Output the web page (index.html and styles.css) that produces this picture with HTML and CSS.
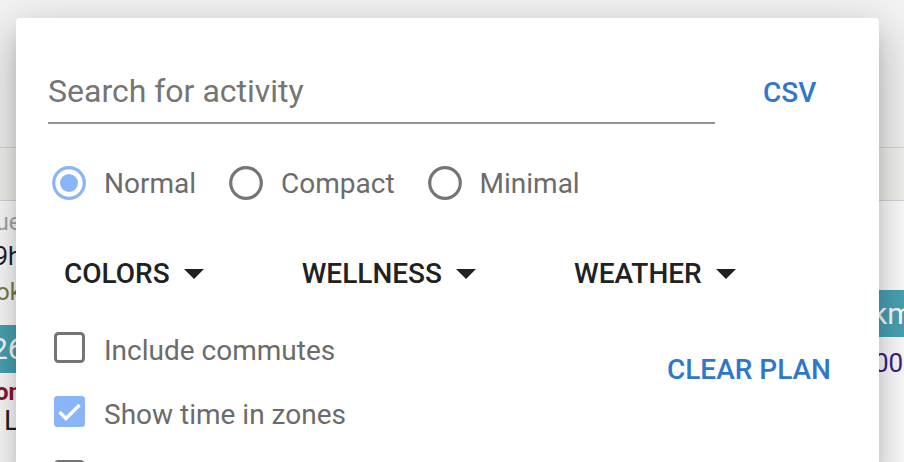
FILE: index.html
```html
<!DOCTYPE html>
<html lang="en">
<head>
<meta charset="utf-8">
<title>Activity options</title>
<link rel="stylesheet" href="styles.css">
</head>
<body>
<div class="page">
  <div class="bg-top"></div>
  <div class="bg-band"></div>
  <div class="bg-rows">
    <div class="bg-left">
      <div class="bl bl-ue">ue</div>
      <div class="bl bl-9h">9h</div>
      <div class="bl bl-ok">ok</div>
      <div class="bl bl-teal">26</div>
      <div class="bl bl-on">on</div>
      <div class="bl bl-l">L</div>
    </div>
    <div class="bg-right">
      <div class="br br-teal">km</div>
      <div class="br br-00">00</div>
    </div>
  </div>

  <div class="dialog">
    <div class="search-row">
      <div class="search">Search for activity</div>
      <div class="btn csv">CSV</div>
    </div>

    <div class="radio-row">
      <div class="radio-item">
        <svg class="radio" viewBox="0 0 34 34" width="34" height="34"><circle cx="17" cy="17" r="15.3" fill="none" stroke="#8ab4f8" stroke-width="3.2"/><circle cx="17" cy="17" r="9" fill="#8ab4f8"/></svg>
        <span class="label">Normal</span>
      </div>
      <div class="radio-item">
        <svg class="radio" viewBox="0 0 34 34" width="34" height="34"><circle cx="17" cy="17" r="15.3" fill="none" stroke="#757575" stroke-width="3.2"/></svg>
        <span class="label">Compact</span>
      </div>
      <div class="radio-item">
        <svg class="radio" viewBox="0 0 34 34" width="34" height="34"><circle cx="17" cy="17" r="15.3" fill="none" stroke="#757575" stroke-width="3.2"/></svg>
        <span class="label">Minimal</span>
      </div>
    </div>

    <div class="menu-row">
      <div class="menu">COLORS<svg class="caret" viewBox="0 0 20 10" width="20" height="10"><path d="M0 0 L20 0 L10 10 Z" fill="#212121"/></svg></div>
      <div class="menu">WELLNESS<svg class="caret" viewBox="0 0 20 10" width="20" height="10"><path d="M0 0 L20 0 L10 10 Z" fill="#212121"/></svg></div>
      <div class="menu">WEATHER<svg class="caret" viewBox="0 0 20 10" width="20" height="10"><path d="M0 0 L20 0 L10 10 Z" fill="#212121"/></svg></div>
    </div>

    <div class="check-row">
      <div class="checks">
        <div class="check-item">
          <svg class="box" viewBox="0 0 31 31" width="31" height="31"><rect x="1.5" y="1.5" width="28" height="28" rx="3" fill="none" stroke="#757575" stroke-width="3"/></svg>
          <span class="label">Include commutes</span>
        </div>
        <div class="check-item">
          <svg class="box" viewBox="0 0 31 31" width="31" height="31"><rect x="0" y="0" width="31" height="31" rx="3.5" fill="#8ab4f8"/><path d="M5.5 16 L12 22.5 L25.5 9" fill="none" stroke="#fff" stroke-width="3.4"/></svg>
          <span class="label">Show time in zones</span>
        </div>
        <div class="check-item">
          <svg class="box" viewBox="0 0 31 31" width="31" height="31"><rect x="1.5" y="1.5" width="28" height="28" rx="3" fill="none" stroke="#757575" stroke-width="3"/></svg>
          <span class="label">Show planned workouts</span>
        </div>
      </div>
      <div class="btn clear">CLEAR PLAN</div>
    </div>
  </div>
</div>
</body>
</html>
```

FILE: styles.css
```css
html, body {
  margin: 0;
  padding: 0;
  width: 904px;
  height: 462px;
  overflow: hidden;
  background: #ffffff;
  font-family: Roboto, "Liberation Sans", sans-serif;
}

.page {
  position: relative;
  width: 904px;
  height: 462px;
  overflow: hidden;
}

.bg-top {
  height: 147px;
  background: #f3f3f3;
  border-bottom: 1px solid #d7d7d7;
}

.bg-band {
  height: 52px;
  background: #f3f3ef;
  border-bottom: 1px solid #d7d7d7;
}

.bg-rows {
  display: flex;
  justify-content: space-between;
}

.bg-left {
  width: 60px;
  display: flex;
  flex-direction: column;
}

.bl {
  white-space: nowrap;
}

.bl-ue { height: 44px; line-height: 44px; font-size: 23px; color: #a8a8a8; text-indent: -4px; }
.bl-9h { height: 23px; line-height: 23px; font-size: 25px; color: #222; text-indent: -6px; }
.bl-ok { height: 48px; line-height: 48px; font-size: 24px; color: #857a3c; text-indent: -4px; }
.bl-teal {
  margin-top: 9px;
  height: 48px;
  line-height: 48px;
  font-size: 30px;
  color: #ffffff;
  background: #4aa5b6;
  text-indent: -9px;
}
.bl-on { height: 38px; line-height: 38px; font-size: 24px; font-weight: 700; color: #8c1732; text-indent: -5px; }
.bl-l { height: 19px; line-height: 19px; font-size: 28px; color: #222; text-indent: 4px; }

.bg-right {
  width: 26px;
  display: flex;
  flex-direction: column;
}

.br { white-space: nowrap; }
.br-teal {
  margin-top: 89px;
  height: 47px;
  line-height: 47px;
  font-size: 30px;
  color: #ffffff;
  background: #4aa5b6;
  text-indent: -6px;
}
.br-00 {
  height: 52px;
  line-height: 52px;
  font-size: 26px;
  color: #3b1f8c;
  text-indent: -4px;
}

/* dialog overlay */
.dialog {
  position: absolute;
  left: 16px;
  top: 18px;
  width: 863px;
  height: 480px;
  box-sizing: border-box;
  padding: 54px 48px 0 32px;
  background: #ffffff;
  border-radius: 4px;
  box-shadow: 0 11px 15px -7px rgba(0,0,0,0.2), 0 24px 38px 3px rgba(0,0,0,0.14), 0 9px 46px 8px rgba(0,0,0,0.12);
}

.search-row {
  display: flex;
  align-items: baseline;
}

.search {
  width: 667px;
  font-size: 32px;
  line-height: 38px;
  color: #757575;
  padding-bottom: 12px;
  border-bottom: 2px solid #949494;
}

.btn {
  font-size: 28px;
  font-weight: 500;
  line-height: 32px;
  color: #3077cc;
  letter-spacing: 0;
}

.csv {
  margin-left: 48px;
}

.radio-row {
  display: flex;
  align-items: center;
  gap: 33px;
  margin-top: 42px;
  margin-left: 4px;
  height: 34px;
}

.radio-item {
  display: flex;
  align-items: center;
  gap: 18px;
}

.radio { display: block; }

.label {
  font-size: 28px;
  line-height: 34px;
  color: #6b6b6b;
  white-space: nowrap;
}

.radio-item .label {
  padding-top: 2px;
}

.menu-row {
  display: flex;
  align-items: center;
  gap: 98px;
  height: 40px;
  margin-top: 54px;
  padding-left: 16px;
}

.menu {
  display: flex;
  align-items: center;
  font-size: 28px;
  font-weight: 500;
  line-height: 40px;
  color: #212121;
}

.caret {
  display: block;
  margin-left: 14px;
}

.check-row {
  display: flex;
  justify-content: space-between;
  align-items: flex-start;
  margin-top: 38px;
}

.checks {
  display: flex;
  flex-direction: column;
  gap: 33px;
  margin-left: 6px;
}

.check-item {
  display: flex;
  align-items: flex-start;
  height: 31px;
}

.box { display: block; flex: none; }

.check-item .label {
  margin-left: 19px;
  line-height: 32px;
  margin-top: 3px;
}

.clear {
  margin-top: 22px;
}
```
